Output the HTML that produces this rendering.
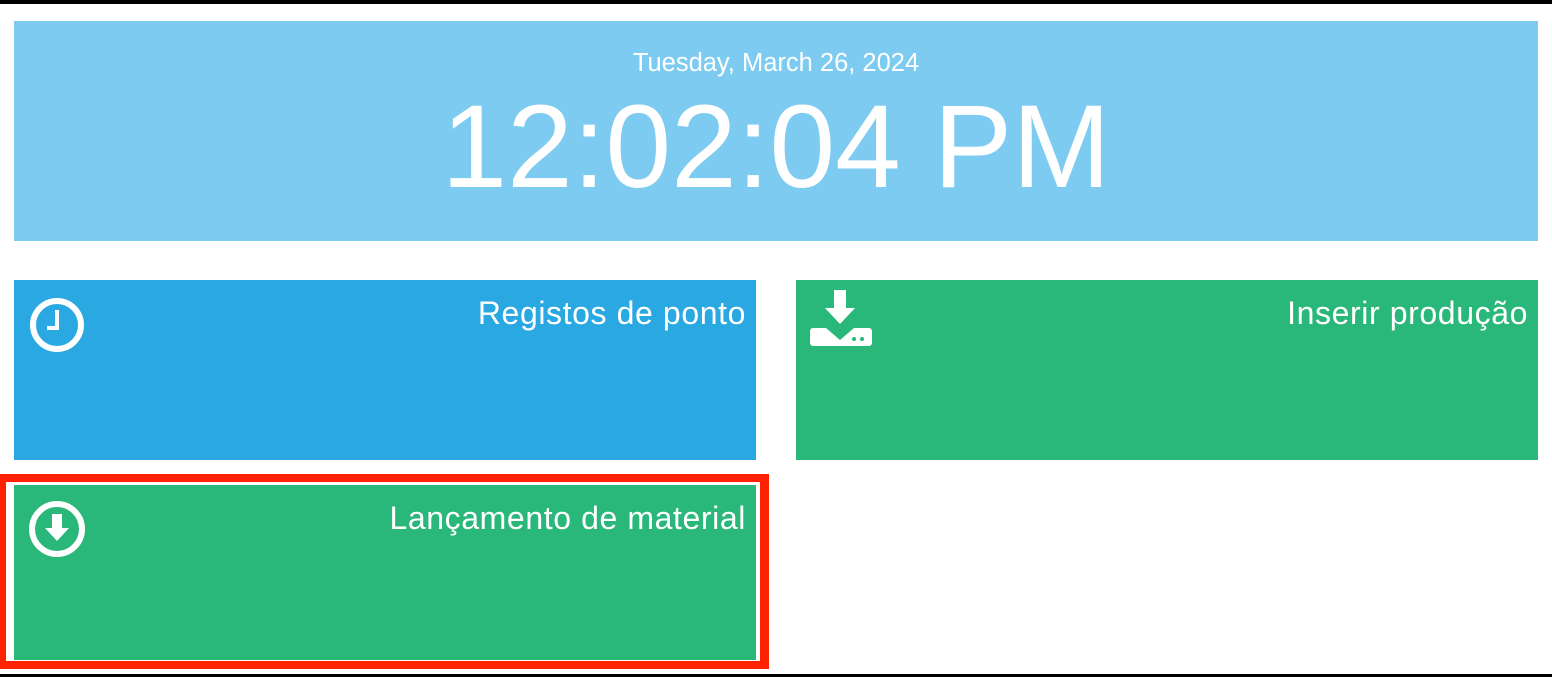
<!DOCTYPE html>
<html><head><meta charset="utf-8"><style>
*{margin:0;padding:0;box-sizing:border-box}
body{width:1552px;height:677px;background:#fff;position:relative;overflow:hidden;font-family:"Liberation Sans",Arial,sans-serif}
.abs{position:absolute}
.tile{position:absolute;color:#fff}
.tile .t{position:absolute;right:10px;top:15px;font-size:32px;font-weight:300;letter-spacing:0.6px}
</style></head><body>
<div class="abs" style="left:0;top:0;width:1552px;height:4px;background:#000"></div>
<div class="abs" style="left:14px;top:21px;width:1524px;height:220px;background:#7dcbf0;color:#fff;text-align:center">
  <div style="position:absolute;left:0;right:0;top:28px;font-size:25.5px">Tuesday, March 26, 2024</div>
  <div style="position:absolute;left:0;right:0;top:58px;font-size:118px;line-height:136px">12:02:04 PM</div>
</div>
<div class="tile" style="left:14px;top:280px;width:742px;height:180px;background:#29a8e2">
  <svg class="abs" style="left:14px;top:18px" width="58" height="54" viewBox="0 0 58 54"><circle cx="29" cy="27" r="24" fill="none" stroke="#fff" stroke-width="6"/><path d="M29 12V30H19" fill="none" stroke="#fff" stroke-width="4"/></svg>
  <div class="t">Registos de ponto</div>
</div>
<div class="tile" style="left:796px;top:280px;width:742px;height:180px;background:#2ab87a">
  <svg class="abs" style="left:14px;top:10px" width="62" height="56" viewBox="0 0 62 56"><path d="M24 0h12v18h9L30 34 15 18h9z" fill="#fff"/><path d="M3 38h13l14 12 14-12h15a3 3 0 0 1 3 3v12a3 3 0 0 1-3 3H3a3 3 0 0 1-3-3V41a3 3 0 0 1 3-3z" fill="#fff"/><circle cx="44" cy="49" r="2" fill="#2ab87a"/><circle cx="52" cy="49" r="2" fill="#2ab87a"/></svg>
  <div class="t">Inserir produção</div>
</div>
<div class="abs" style="left:0;top:474px;width:769px;height:195px;background:#ff2200"></div>
<div class="abs" style="left:6px;top:482px;width:754px;height:179px;background:#fff"></div>
<div class="tile" style="left:14px;top:485px;width:742px;height:175px;background:#2ab87a">
  <svg class="abs" style="left:14px;top:16px" width="58" height="56" viewBox="0 0 58 56"><circle cx="29" cy="28" r="25" fill="none" stroke="#fff" stroke-width="6"/><path d="M24 13h10v14h7L29 40 17 27h7z" fill="#fff"/></svg>
  <div class="t">Lançamento de material</div>
</div>
<div class="abs" style="left:0;top:674px;width:1552px;height:3px;background:#000"></div>
</body></html>
